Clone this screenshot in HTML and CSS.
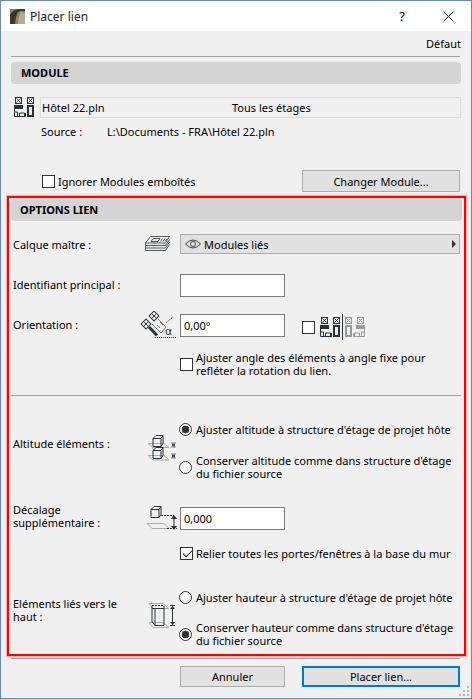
FILE: index.html
```html
<!doctype html>
<html>
<head>
<meta charset="utf-8">
<title>Placer lien</title>
<link rel="stylesheet" href="styles.css">
</head>

<body>
<svg class="defs" width="0" height="0">
	<symbol id="module" viewBox="0 0 20 20">
		<g fill="none" stroke="currentColor" stroke-width="1">
			<rect x="1.5" y="0.5" width="6" height="6"/>
			<path d="M2.5 1.5l4 4M6.5 1.5l-4 4"/>
			<rect x="13.5" y="0.5" width="6" height="6"/>
			<path d="M14.5 1.5l4 4M18.5 1.5l-4 4"/>
			<path d="M0.5 12v7.5h11V16M3.5 19v-4h-3M5.5 19v-3h5v3"/>
		</g>
		<path d="M0 8h9v4H0zM13 8h7v12h-7z" fill="currentColor"/>
		<path d="M15 10h3v8h-3z" fill="#f0f0f0"/>
	</symbol>
</svg>
<div class="dialog">
	<div class="titlebar">
		<svg class="appicon" width="15" height="15" viewBox="0 0 15 15">
			<rect width="15" height="15" fill="#8d8470"/>
			<path d="M0 15V6Q3 0 9 0h6v2H10Q6 3 5 15z" fill="#3c362c"/>
			<path d="M8 15q0-8 3-12l4 1v11z" fill="#b5ad97"/>
		</svg>
		<span class="wintitle">Placer lien</span>
		<span class="help">?</span>
		<svg class="close" width="11" height="11" viewBox="0 0 11 11"><path d="M0.5 0.5l10 10M10.5 0.5l-10 10" stroke="#222" fill="none"/></svg>
	</div>
	<div class="main">
		<div class="defaut">Défaut</div>
		<div class="rule"></div>
		<div class="head">MODULE</div>
		<div class="filerow">
			<svg class="modicon" width="20" height="20"><use href="#module"/></svg>
			<div class="filebox"><span class="filename">Hôtel 22.pln</span><span>Tous les étages</span></div>
		</div>
		<div class="sourcerow"><span class="sourcelab">Source :</span><span>L:\Documents - FRA\Hôtel 22.pln</span></div>
		<div class="ignorerow">
			<label class="check"><input type="checkbox"><span>Ignorer Modules emboîtés</span></label>
			<button class="btn changer">Changer Module...</button>
		</div>

		<div class="options">
			<div class="head head2">OPTIONS LIEN</div>

			<div class="row r-calque">
				<div class="lab">Calque maître :</div>
				<svg class="ico" width="26" height="17" viewBox="0 0 26 17">
					<g fill="none" stroke="#2b3238" stroke-width="0.800">
						<path d="M6.500 0.500h19l-4 6.500h-20zM9 2.500h7l-2 3H7z"/>
						<path d="M18.500 2.500l-2 3M21 2.500l-2 3M23 2.500l-2 3"/>
						<path d="M1.500 7v2.500h20l4-6M1.500 9.500V12h20l4-6M1.500 12v2.500h20l4-6"/>
					</g>
				</svg>
				<div class="select">
					<svg width="16" height="10" viewBox="0 0 16 10"><path d="M0.500 5Q8-3 15.500 5Q8 13 0.500 5z" fill="none" stroke="#444"/><circle cx="8" cy="5" r="2.500" fill="none" stroke="#444"/></svg>
					<span>Modules liés</span>
					<i class="arrow"></i>
				</div>
			</div>

			<div class="row r-ident">
				<div class="lab">Identifiant principal :</div>
				<div></div>
				<input class="field" type="text">
			</div>

			<div class="row r-orient">
				<div class="lab">Orientation :</div>
				<svg class="ico" width="36" height="27" viewBox="0 0 36 27">
					<g fill="none" stroke="#2b3238">
						<rect x="10.500" y="1.500" width="7" height="7" transform="rotate(45 14 5)"/>
						<path d="M11.500 2.500l5 5M16.500 2.500l-5 5"/>
						<rect x="2.500" y="9.500" width="7" height="7" transform="rotate(45 6 13)"/>
						<path d="M3.500 10.500l5 5M8.500 10.500l-5 5"/>
						<path d="M9 16l8 8.500" stroke-width="3"/>
						<path d="M18 8l8 8-5 6-9-9" stroke="#777"/>
						<path d="M17 14l3 3M20 11l3 3" stroke="#777"/>
						<path d="M26 12l7-6" stroke-dasharray="2 1" stroke="#555"/>
						<path d="M15 26.500h21" stroke-dasharray="1 1"/>
					</g>
					<text class="alpha" x="25" y="24">α</text>
				</svg>
				<div class="orient">
					<input class="field" type="text" value="0,00°">
					<div class="mirror">
						<input class="box" type="checkbox">
						<svg class="mod1" width="20" height="20"><use href="#module"/></svg>
						<i class="divider"></i>
						<svg class="mod2" width="20" height="20"><use href="#module"/></svg>
					</div>
				</div>
			</div>

			<div class="row r-ajust">
				<div></div><div></div>
				<label class="check two"><input type="checkbox"><span>Ajuster angle des éléments à angle fixe pour<br>refléter la rotation du lien.</span></label>
			</div>

			<div class="rule rule-mid"></div>

			<div class="row r-alt">
				<div class="lab">Altitude éléments :</div>
				<svg class="ico" width="30" height="26" viewBox="0 0 30 26">
					<g fill="none" stroke="#aaa">
						<path d="M1 8.500h16l5 4H6zM1 20.500h16l5 4.500H6z"/>
					</g>
					<g fill="none" stroke="#2b3238">
						<path d="M6 3.500l3-3h7v8l-2 3H6zM6 3.500h8v8M14 3.500l2-3"/>
						<path d="M6 15.500l3-3h7v8l-2 3H6zM6 15.500h8v8M14 15.500l2-3"/>
					</g>
					<path d="M24 8h5M24 12h5M25 9h3l-1.500 1.500zM25 11h3l-1.500-1.500zM24 19h5M24 23h5M25 20h3l-1.500 1.500zM25 22h3l-1.500-1.500z" fill="#2b3238" stroke="#2b3238" stroke-width="0.600"/>
				</svg>
				<div class="radios">
					<label class="radio"><input type="radio" name="alt" checked><span>Ajuster altitude à structure d'étage de projet hôte</span></label>
					<label class="radio two"><input type="radio" name="alt"><span>Conserver altitude comme dans structure d'étage<br>du fichier source</span></label>
				</div>
			</div>

			<div class="row r-decal">
				<div class="lab">Décalage<br>supplémentaire :</div>
				<svg class="ico" width="31" height="24" viewBox="0 0 31 24">
					<path d="M1 17.500h17l5 5H6z" fill="none" stroke="#aaa"/>
					<path d="M5 3.500l3-3h7v8l-2 3H5zM5 3.500h8v8M13 3.500l2-3" fill="none" stroke="#2b3238"/>
					<path d="M15 9.500h13M21 22.500h10" stroke="#2b3238" stroke-dasharray="2 1" fill="none"/>
					<path d="M28 12v9" stroke="#2b3238" fill="none"/>
					<path d="M28 9l3 4h-6zM28 24l3-4h-6z" fill="#2b3238"/>
				</svg>
				<input class="field" type="text" value="0,000">
			</div>

			<div class="row r-relier">
				<div></div><div></div>
				<label class="check"><input type="checkbox" checked><span>Relier toutes les portes/fenêtres à la base du mur</span></label>
			</div>

			<div class="row r-haut">
				<div class="lab">Eléments liés vers le<br>haut :</div>
				<svg class="ico" width="28" height="26" viewBox="0 0 28 26">
					<path d="M1 0.500h14l6 5H5zM1 19.500h14l6 5H5z" fill="none" stroke="#aaa"/>
					<path d="M4 3v15.500l3 4h9V3M7 5.500v17M4 5.500h12" fill="none" stroke="#2b3238"/>
					<path d="M4 2.500h12" stroke="#2b3238" stroke-dasharray="2 1"/>
					<path d="M22 2.500h5M22 22.500h5M24.500 4v17" stroke="#2b3238" fill="none"/>
					<path d="M24.500 3l2.500 3h-5zM24.500 22l2.500-3h-5z" fill="#2b3238"/>
				</svg>
				<div class="radios radios-haut">
					<label class="radio"><input type="radio" name="haut"><span>Ajuster hauteur à structure d'étage de projet hôte</span></label>
					<label class="radio two"><input type="radio" name="haut" checked><span>Conserver hauteur comme dans structure d'étage<br>du fichier source</span></label>
				</div>
			</div>
		</div>

		<div class="rule rule-bottom"></div>
		<div class="footer">
			<button class="btn annuler">Annuler</button>
			<button class="btn placer">Placer lien...</button>
		</div>
	</div>
	<svg class="grip" width="11" height="11" viewBox="0 0 11 11"><path d="M8 0h2v2H8zM4 4h2v2H4zM8 4h2v2H8zM0 8h2v2H0zM4 8h2v2H4zM8 8h2v2H8z" fill="#b5b5b5"/></svg>
</div>
</body>
</html>
```

FILE: styles.css
```css
*{margin: 0;padding: 0;box-sizing: border-box;}
body{
	background-color: #f0f0f0;
	font-family: "Noto Sans", "DejaVu Sans", sans-serif;
	font-size: 11px;
	line-height: 13px;
	color: #000000;
}
.defs{
	display: block;
	height: 0;
}
.dialog{
	width: 472px;
	height: 699px;
	border: 1px solid #6c8ba6;
	background: #f0f0f0;
	position: relative;
	overflow: hidden;
}
.titlebar{
	height: 30px;
	background: #FFFFFF;
	display: flex;
	align-items: center;
	padding: 0 17px 0 9px;
}
.appicon{
	margin-right: 5px;
}
.wintitle{
	font-size: 12px;
	flex: 1;
	color: #222;
}
.help{
	font-size: 13px;
	margin-right: 38px;
}
.main{
	padding: 0 10px;
}
.defaut{
	height: 25px;
	padding: 6px 0 0;
	text-align: right;
}
.rule{
	height: 1px;
	background: #a0a0a0;
	margin-right: 1px;
}
.head{
	margin-top: 5px;
	height: 22px;
	line-height: 22px;
	background: #d4d4d4;
	border-radius: 4px;
	padding-left: 10px;
	font-weight: 700;
	font-size: 11px;
}
.filerow{
	margin-top: 13px;
	display: flex;
	align-items: center;
	height: 20px;
}
.modicon{
	margin: 0 6px 0 3px;
	color: #2b3238;
}
.filebox{
	flex: 1;
	height: 21px;
	border: 1px solid #dcdcdc;
	display: flex;
	align-items: center;
	padding-left: 1px;
}
.filename{
	width: 190px;
}
.sourcerow{
	margin-top: 8px;
	padding-left: 30px;
	display: flex;
}
.sourcelab{
	width: 66px;
}
.ignorerow{
	margin-top: 32px;
	display: flex;
	justify-content: space-between;
	align-items: center;
	padding-left: 31px;
	height: 22px;
}
.check, .radio{
	display: flex;
	align-items: center;
}
.check input, .box{
	appearance: none;
	width: 13px;
	height: 13px;
	border: 1px solid #333;
	background: #FFFFFF;
	margin-right: 3px;
	flex: none;
	display: block;
}
.check input:checked::after{
	content: "";
	display: block;
	width: 8px;
	height: 4px;
	margin: 2px 0 0 1.500px;
	border-left: 1px solid #222;
	border-bottom: 1px solid #222;
	transform: rotate(-45deg);
}
.radio input{
	appearance: none;
	width: 13px;
	height: 13px;
	border: 1px solid #333;
	border-radius: 50%;
	background: #FFFFFF;
	margin-right: 4px;
	flex: none;
	display: block;
}
.radio input:checked{
	background: radial-gradient(circle, #333 0, #333 3.500px, #FFFFFF 4.200px);
}
.btn{
	font-family: inherit;
	font-size: 11px;
	background: #e1e1e1;
	border: 1px solid #adadad;
	color: #000000;
}
.changer{
	width: 158px;
	height: 22px;
	margin-right: 1px;
}

.options{
	margin: 4px -5px 0 -4px;
	border: 2px solid #ff0000;
	box-shadow: 0 0 1px 1px rgba(255,120,120,0.500);
	padding: 0 2px;
	height: 460px;
}
.head2{
	margin-top: 0;
	height: 23px;
	line-height: 23px;
	padding-left: 9px;
}
.row{
	display: grid;
	grid-template-columns: 131px 36px 1fr;
	padding-left: 2px;
}
.lab{
	align-self: start;
}
.ico{
	justify-self: end;
	margin-right: 4px;
	display: block;
}
.r-calque{
	margin-top: 13px;
	height: 20px;
	align-items: center;
}
.r-calque .lab{
	align-self: center;
}
.r-calque .ico{
	margin-right: 10px;
}
.select{
	height: 20px;
	margin-right: 2px;
	background: #e1e1e1;
	border: 1px solid #adadad;
	display: flex;
	align-items: center;
	padding-left: 4px;
	gap: 3px;
}
.arrow{
	margin-left: auto;
	margin-right: 3px;
	border-left: 4px solid #333;
	border-top: 4px solid transparent;
	border-bottom: 4px solid transparent;
}
.field{
	width: 105px;
	height: 23px;
	border: 1px solid #7a7a7a;
	background: #FFFFFF;
	font-family: inherit;
	font-size: 11px;
	padding-left: 3px;
	outline: none;
	display: block;
}
.r-ident{
	margin-top: 20px;
	height: 23px;
}
.r-ident .lab{
	padding-top: 4px;
}
.r-orient{
	margin-top: 17px;
	height: 23px;
}
.r-orient .lab{
	padding-top: 4px;
}
.r-orient .ico{
	margin: -3px 4px 0 0;
}
.orient{
	display: flex;
}
.mirror{
	display: flex;
	align-items: center;
	margin-left: 17px;
}
.mirror .box{
	margin-right: 5px;
}
.mod1{
	color: #2b3238;
}
.mod2{
	color: #999;
	transform: scaleX(-1);
}
.divider{
	width: 1px;
	height: 26px;
	background: #2b3238;
	margin: 0 2px;
}
.alpha{
	font-size: 11px;
	fill: #2b3238;
	font-family: "DejaVu Sans", sans-serif;
}
.r-ajust{
	margin-top: 14px;
}
.rule-mid{
	margin-top: 18px;
}
.r-alt{
	margin-top: 27px;
	height: 57px;
}
.r-alt .lab{
	padding-top: 14px;
}
.r-alt .ico{
	margin: 12px 3px 0 0;
}
.radios{
	display: flex;
	flex-direction: column;
	gap: 18px;
	margin-left: -1px;
}
.radios-haut{
	gap: 17px;
}
.r-decal{
	margin-top: 27px;
	height: 23px;
	align-items: start;
}
.r-decal .lab{
	margin-top: -4px;
}
.r-decal .ico{
	margin-right: 3px;
	margin-top: -1px;
}
.r-relier{
	margin-top: 17px;
	height: 13px;
}
.r-haut{
	margin-top: 31px;
	height: 56px;
}
.r-haut .lab{
	padding-top: 6px;
}
.r-haut .ico{
	margin: 12px 4px 0 0;
}

.rule-bottom{
	margin-top: 2px;
}
.footer{
	margin-top: 7px;
	display: flex;
	justify-content: flex-end;
	gap: 17px;
	padding-right: 1px;
}
.annuler{
	width: 105px;
	height: 21px;
}
.placer{
	width: 158px;
	height: 21px;
	border: 2px solid #0078d7;
}
.grip{
	position: absolute;
	right: 1px;
	bottom: 1px;
}
```
